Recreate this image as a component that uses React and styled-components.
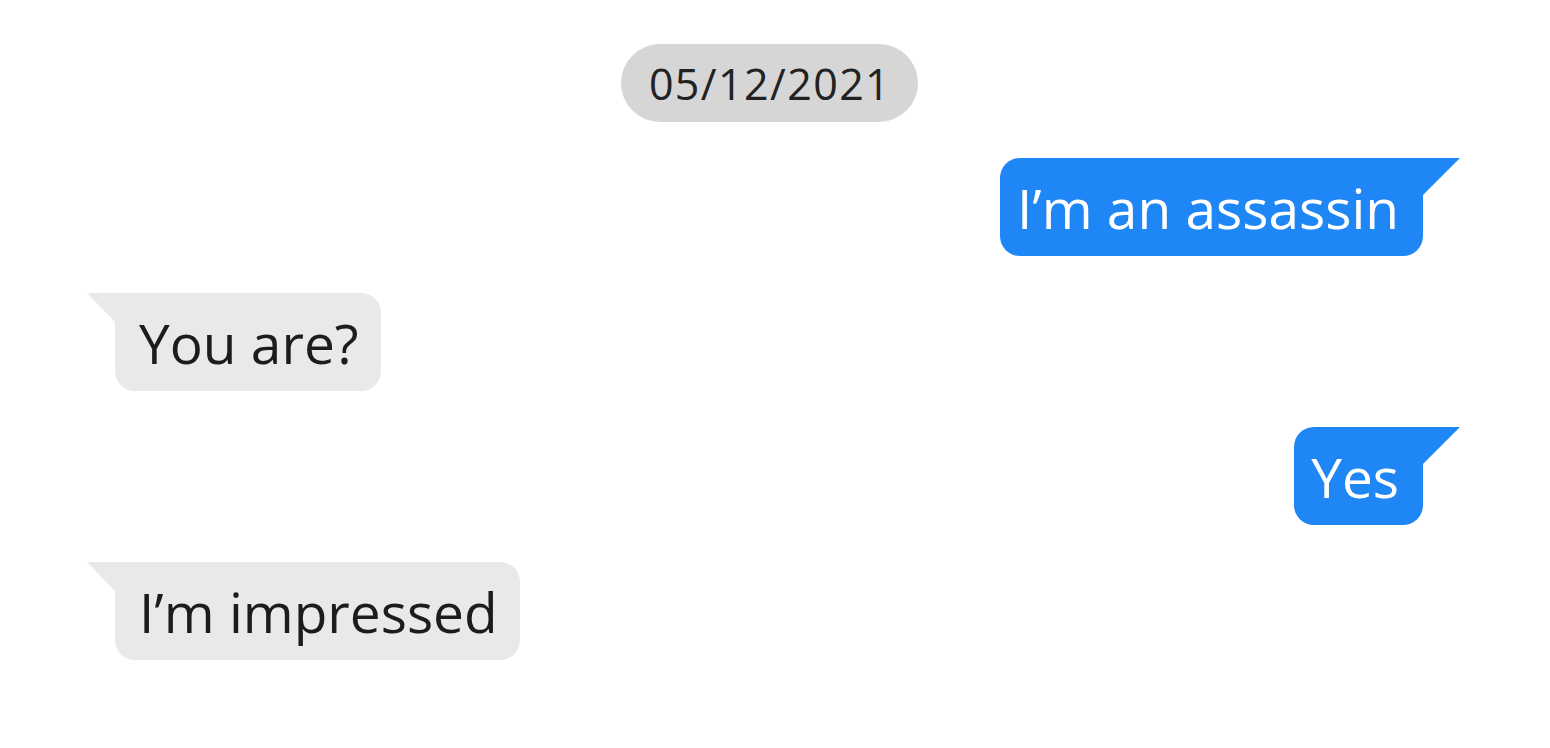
import React from "react";
import styled, { createGlobalStyle, css } from "styled-components";

const Global = createGlobalStyle`
  html, body { margin: 0; padding: 0; background: #ffffff; }
  body { font-family: "Open Sans", "Noto Sans", sans-serif; }
`;

const Thread = styled.main`
  display: flex;
  flex-direction: column;
  gap: 36px;
  padding: 44px 90px 0 87px;
  width: 1550px;
  box-sizing: border-box;
`;

const DateRow = styled.div`
  display: flex;
  justify-content: center;
  padding-right: 8px;
`;

const DatePill = styled.div`
  height: 78px;
  padding: 0 27px 0 28px;
  border-radius: 39px;
  background: #d6d6d6;
  color: #222222;
  font-size: 43px;
  letter-spacing: 1.4px;
  display: flex;
  align-items: center;
`;

const Row = styled.div`
  display: flex;
  justify-content: ${(p) => (p.$out ? "flex-end" : "flex-start")};
  padding-top: ${(p) => (p.$out ? "0" : "1px")};
`;

const Bubble = styled.div`
  position: relative;
  height: 98px;
  box-sizing: border-box;
  display: flex;
  align-items: center;
  font-size: 55px;
  white-space: nowrap;
  ${(p) =>
    p.$out
      ? css`
          background: #1f87f5;
          color: #ffffff;
          margin-right: 37px;
          padding: 0 24px 0 17px;
          border-radius: 20px 0 20px 20px;
          &::after {
            content: "";
            position: absolute;
            top: 0;
            left: 100%;
            width: 37px;
            height: 37px;
            background: #1f87f5;
            clip-path: polygon(0 0, 100% 0, 0 100%);
          }
        `
      : css`
          background: #e9e9e9;
          color: #1c1c1c;
          margin-left: 28px;
          padding: 0 22px 0 24px;
          border-radius: 0 20px 20px 20px;
          &::before {
            content: "";
            position: absolute;
            top: 0;
            right: 100%;
            width: 28px;
            height: 29px;
            background: #e9e9e9;
            clip-path: polygon(0 0, 100% 0, 100% 100%);
          }
        `}
`;

const messages = [
  { out: true, text: "I’m an assassin" },
  { out: false, text: "You are?" },
  { out: true, text: "Yes" },
  { out: false, text: "I’m impressed" },
];

export default function App() {
  return (
    <>
      <Global />
      <Thread>
        <DateRow>
          <DatePill>05/12/2021</DatePill>
        </DateRow>
        {messages.map((m, i) => (
          <Row key={i} $out={m.out}>
            <Bubble $out={m.out}>{m.text}</Bubble>
          </Row>
        ))}
      </Thread>
    </>
  );
}
